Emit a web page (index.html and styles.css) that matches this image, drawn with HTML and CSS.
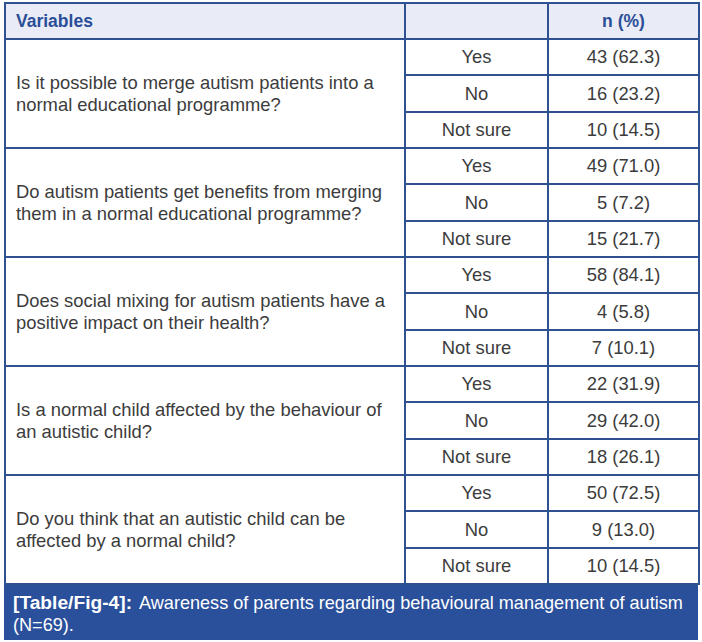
FILE: index.html
```html
<!DOCTYPE html>
<html>
<head>
<meta charset="utf-8">
<link rel="stylesheet" href="styles.css">
</head>
<body>
<div class="wrap">
<table class="data">
  <colgroup><col class="c1"><col class="c2"><col class="c3"></colgroup>
  <thead>
    <tr><th class="hv">Variables</th><th></th><th class="hn">n (%)</th></tr>
  </thead>
  <tbody>
    <tr><td class="q" rowspan="3">Is it possible to merge autism patients into a normal educational programme?</td><td>Yes</td><td>43 (62.3)</td></tr>
    <tr><td>No</td><td>16 (23.2)</td></tr>
    <tr><td>Not sure</td><td>10 (14.5)</td></tr>
    <tr><td class="q" rowspan="3">Do autism patients get benefits from merging them in a normal educational programme?</td><td>Yes</td><td>49 (71.0)</td></tr>
    <tr><td>No</td><td>5 (7.2)</td></tr>
    <tr><td>Not sure</td><td>15 (21.7)</td></tr>
    <tr><td class="q" rowspan="3">Does social mixing for autism patients have a positive impact on their health?</td><td>Yes</td><td>58 (84.1)</td></tr>
    <tr><td>No</td><td>4 (5.8)</td></tr>
    <tr><td>Not sure</td><td>7 (10.1)</td></tr>
    <tr><td class="q" rowspan="3">Is a normal child affected by the behaviour of an autistic child?</td><td>Yes</td><td>22 (31.9)</td></tr>
    <tr><td>No</td><td>29 (42.0)</td></tr>
    <tr><td>Not sure</td><td>18 (26.1)</td></tr>
    <tr><td class="q" rowspan="3">Do you think that an autistic child can be affected by a normal child?</td><td>Yes</td><td>50 (72.5)</td></tr>
    <tr><td>No</td><td>9 (13.0)</td></tr>
    <tr><td>Not sure</td><td>10 (14.5)</td></tr>
  </tbody>
</table>
<div class="caption">
  <div class="cap-line"><span class="tag">[Table/Fig-4]:</span><span class="desc">Awareness of parents regarding behavioural management of autism</span></div>
  <div class="cap-line">(N=69).</div>
</div>
</div>
</body>
</html>
```
FILE: styles.css
```css
html, body {
  margin: 0;
  padding: 0;
  background: #ffffff;
}
.wrap {
  width: 694px;
  margin: 2px 0 0 4px;
  font-family: "Liberation Sans", Arial, sans-serif;
}
.data {
  width: 694px;
  border-collapse: collapse;
  table-layout: fixed;
  color: #3c3c3c;
  font-size: 18.4px;
}
.c1 { width: 400px; }
.c2 { width: 143px; }
.c3 { width: 151px; }
.data th, .data td {
  border: 2px solid #2f5192;
  padding: 0;
  height: 34px;
  text-align: center;
  vertical-align: middle;
  line-height: 22px;
}
.data tbody tr:nth-child(3n+2) td {
  height: 35px;
}
.data th {
  background: #e9ebf6;
  color: #2b4e98;
  font-weight: bold;
  font-size: 17.5px;
  height: 34px;
}
.data th.hv {
  text-align: left;
  padding-left: 10px;
}
.data td.q {
  text-align: left;
  padding: 0 6px 0 10px;
}
.caption {
  background: #2a4f9b;
  color: #ffffff;
  font-size: 18.1px;
  line-height: 22px;
  padding: 7px 9px 4px 9px;
}
.cap-line {
  white-space: nowrap;
}
.tag {
  font-weight: bold;
  font-size: 19.2px;
  margin-right: 7px;
}
```
